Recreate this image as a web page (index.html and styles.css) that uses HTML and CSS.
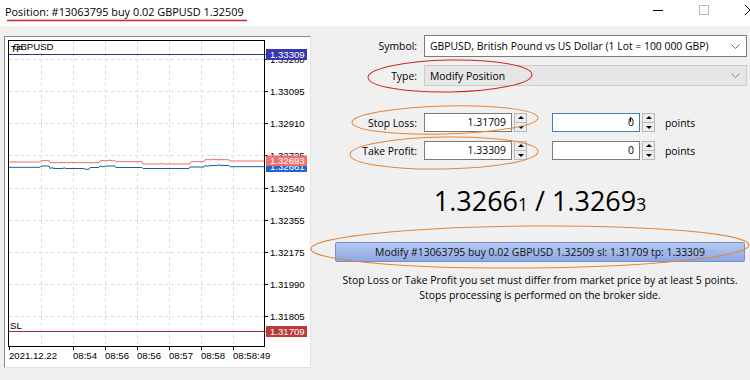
FILE: index.html
```html
<!DOCTYPE html>
<html lang="en">
<head>
    <meta charset="UTF-8">
    <title>Position: #13063795 buy 0.02 GBPUSD 1.32509</title>
    <link rel="stylesheet" href="styles.css">
</head>
<body>
    <div class="titlebar">
        <span class="title">Position: #13063795 buy 0.02 GBPUSD 1.32509</span>
        <div class="win-controls">
            <span class="win-btn">
                <svg width="12" height="12" viewBox="0 0 12 12"><path d="M1 6.5h10" stroke="#000" stroke-width="1"/></svg>
            </span>
            <span class="win-btn">
                <svg width="12" height="12" viewBox="0 0 12 12"><rect x="1.5" y="1.5" width="9" height="9" fill="none" stroke="#b4b4b4"/></svg>
            </span>
            <span class="win-btn">
                <svg width="12" height="12" viewBox="0 0 12 12"><path d="M1 1l10 10M11 1L1 11" stroke="#000" stroke-width="1"/></svg>
            </span>
        </div>
    </div>

    <div class="main">
        <div class="chart-panel">
            <svg class="chart" width="305" height="330" viewBox="5 37 305 330">
                <!-- grid -->
                <g class="grid">
                    <path d="M41.5 41V346M73.5 41V346M105.5 41V346M137.5 41V346M169.5 41V346M201.5 41V346M233.5 41V346"/>
                    <path d="M9 59.5H264M9 91.5H264M9 123.5H264M9 155.5H264M9 188.5H264M9 220.5H264M9 252.5H264M9 284.5H264M9 316.5H264"/>
                </g>
                <path class="ticks" d="M264 59.5h4M264 91.5h4M264 123.5h4M264 155.5h4M264 188.5h4M264 220.5h4M264 252.5h4M264 284.5h4M264 316.5h4M9.5 346v4M73.5 346v4M105.5 346v4M137.5 346v4M169.5 346v4M201.5 346v4M233.5 346v4"/>
                <rect class="frame" x="8.5" y="40.5" width="256" height="306"/>

                <g class="axis">
                    <text x="270" y="63">1.33280</text>
                    <text x="270" y="95">1.33095</text>
                    <text x="270" y="127">1.32910</text>
                    <text x="270" y="159">1.32725</text>
                    <text x="270" y="192">1.32540</text>
                    <text x="270" y="224">1.32355</text>
                    <text x="270" y="256">1.32175</text>
                    <text x="270" y="288">1.31990</text>
                    <text x="270" y="320">1.31805</text>
                    <text x="9" y="359">2021.12.22</text>
                    <text x="73" y="359">08:54</text>
                    <text x="105" y="359">08:56</text>
                    <text x="137" y="359">08:56</text>
                    <text x="169" y="359">08:57</text>
                    <text x="201" y="359">08:58</text>
                    <text x="233" y="359">08:58:49</text>
                </g>

                <!-- take profit -->
                <path d="M9 54.5H266" stroke="#30308e" stroke-width="1"/>
                <text class="tag-text" x="10.5" y="51.5">TP</text>
                <text class="tag-text" x="13" y="50">GBPUSD</text>
                <rect x="266" y="49" width="41" height="11" fill="#3636ae"/>
                <text class="label-text" x="270" y="57.5">1.33309</text>

                <!-- bid / ask -->
                <polyline class="ask" points="9,162 40,162 41,160.7 49,160.7 50,162.7 70,162.7 71,162 73,162.7 99,162.7 100,160.7 108,160.7 109,160 112,160.7 115,160.7 116,161.7 142,161.7 143,164 160,164 161,163.4 163,164 190,164 191,161.7 204,161.7 205,159.7 212,159.7 213,159 216,159.7 229,159.7 230,161 264,161"/>
                <polyline class="bid" points="9,167.3 40,167.3 41,166 49,166 50,168.5 52,167.6 54,168.5 63,168.5 64,167.8 66,168.5 84,168.5 85,169.3 89,169.3 90,167.5 99,167.5 100,166 103,166.8 106,166 115,166 116,167.5 142,167.5 143,168.5 189,168.5 190,167 204,167 205,165.5 208,166.2 210,165.5 217,165.5 218,164.8 221,165.5 229,165.5 230,166.7 264,166.7"/>
                <rect x="266" y="161" width="41" height="11" fill="#2462cf"/>
                <text class="label-text" x="270" y="169.5">1.32661</text>
                <rect x="266" y="155.5" width="41" height="10.5" fill="#f0706c"/>
                <text class="label-text" x="270" y="164">1.32693</text>

                <!-- stop loss -->
                <path d="M9 331.5H266" stroke="#a3302e" stroke-width="1"/>
                <text class="tag-text" x="10" y="329">SL</text>
                <rect x="266" y="326" width="41" height="11" fill="#bb3a38"/>
                <text class="label-text" x="270" y="334.5">1.31709</text>
            </svg>
        </div>

        <div class="dialog">
            <div class="field symbol-field">
                <label class="field-label">Symbol:</label>
                <div class="select">
                    <span>GBPUSD, British Pound vs US Dollar (1 Lot = 100 000 GBP)</span>
                    <svg class="chevron" width="9" height="5" viewBox="0 0 9 5"><path d="M0.5 0.5l4 4 4-4" fill="none" stroke="#6a6a6a"/></svg>
                </div>
            </div>

            <div class="field type-field">
                <label class="field-label">Type:</label>
                <div class="select disabled">
                    <span>Modify Position</span>
                    <svg class="chevron" width="9" height="5" viewBox="0 0 9 5"><path d="M0.5 0.5l4 4 4-4" fill="none" stroke="#8a8a8a"/></svg>
                </div>
            </div>

            <div class="field sl-field">
                <label class="field-label">Stop Loss:</label>
                <div class="num">1.31709</div>
                <div class="spin"><span class="up"></span><span class="down"></span></div>
                <div class="num focused"><span class="caret"></span>0</div>
                <div class="spin"><span class="up"></span><span class="down"></span></div>
                <span class="unit">points</span>
            </div>

            <div class="field">
                <label class="field-label">Take Profit:</label>
                <div class="num">1.33309</div>
                <div class="spin"><span class="up"></span><span class="down"></span></div>
                <div class="num">0</div>
                <div class="spin"><span class="up"></span><span class="down"></span></div>
                <span class="unit">points</span>
            </div>

            <div class="order-box">
                <div class="quote">1.3266<span class="pip">1</span> / 1.3269<span class="pip">3</span></div>
                <button class="modify-btn">Modify #13063795 buy 0.02 GBPUSD 1.32509 sl: 1.31709 tp: 1.33309</button>
                <p class="note">Stop Loss or Take Profit you set must differ from market price by at least 5 points.<br>Stops processing is performed on the broker side.</p>
            </div>
        </div>
    </div>

    <!-- hand drawn marks over the screenshot -->
    <svg class="marks" width="750" height="380" viewBox="0 0 750 380">
        <path d="M7 20.5H247" stroke="#d42424" stroke-width="1.4"/>
        <ellipse cx="450" cy="76" rx="82" ry="16" stroke="#c8242c" transform="rotate(-1 450 76)"/>
        <ellipse cx="445" cy="120" rx="93" ry="14" stroke="#e3843a" transform="rotate(-1.5 445 120)"/>
        <ellipse cx="444" cy="153" rx="94" ry="16" stroke="#e3843a" transform="rotate(-1 444 153)"/>
        <ellipse cx="530" cy="247" rx="219" ry="21" stroke="#e3843a" transform="rotate(-0.5 530 247)"/>
    </svg>
</body>
</html>
```

FILE: styles.css
```css
* {
    margin: 0;
    padding: 0;
    box-sizing: border-box;
}

body {
    width: 750px;
    height: 380px;
    overflow: hidden;
    position: relative;
    background-color: #f0f0f0;
    font-family: 'Open Sans', 'Noto Sans', sans-serif;
    font-size: 10.4px;
    color: #000;
}

/* window title */
.titlebar {
    height: 26px;
    background: #fff;
    display: flex;
    align-items: center;
    padding-left: 5px;
}

.title {
    font-size: 10.9px;
    position: relative;
    top: -2px;
}

.win-controls {
    margin-left: auto;
    margin-right: -23px;
    display: flex;
    align-self: stretch;
}

.win-btn {
    width: 46px;
    display: flex;
    align-items: center;
    justify-content: center;
    padding-bottom: 6px;
}

.main {
    display: flex;
    padding: 10px 0 0 4px;
}

/* chart */
.chart-panel {
    width: 307px;
    height: 332px;
    background: #fff;
    border: 1px solid #e2e2e2;
    border-top-color: #8a8a8a;
    border-left-color: #8a8a8a;
}

.chart {
    display: block;
    font-family: 'Liberation Sans', Arial, sans-serif;
}

.grid path {
    stroke: #dadada;
    stroke-dasharray: 3 3;
    fill: none;
}

.ticks {
    stroke: #000;
    fill: none;
}

.frame {
    fill: none;
    stroke: #000;
}

.axis text,
.tag-text {
    font-size: 9.6px;
    fill: #000;
}

.label-text {
    font-size: 9.6px;
    fill: #fff;
}

.ask {
    fill: none;
    stroke: #e2706a;
    stroke-width: 1;
}

.bid {
    fill: none;
    stroke: #1f5d9c;
    stroke-width: 1;
}

/* order dialog */
.dialog {
    flex: 1;
    margin-top: -1px;
}

.field {
    display: flex;
    align-items: center;
}

.field-label {
    width: 106px;
    margin-right: 7px;
    text-align: right;
}

.symbol-field {
    margin-bottom: 8px;
}

.type-field {
    margin-bottom: 27px;
}

.sl-field {
    margin-bottom: 9px;
}

.select {
    width: 323px;
    height: 22px;
    background: #fff;
    border: 1px solid #7a7a7a;
    display: flex;
    align-items: center;
    padding: 0 6px 0 5px;
}

.select.disabled {
    height: 21px;
    background: #e6e6e6;
    border-color: #cccccc;
}

.chevron {
    margin-left: auto;
}

.num {
    width: 88px;
    height: 19px;
    background: #fff;
    border: 1px solid #7a7a7a;
    text-align: right;
    padding-right: 5px;
    line-height: 17px;
    position: relative;
}

.num.focused {
    border-color: #3c7fc1;
}

.caret {
    position: absolute;
    right: 8px;
    top: 3px;
    width: 1px;
    height: 5px;
    background: #000;
}

.spin {
    width: 13px;
    height: 19px;
    margin: 0 25px 0 2px;
    display: flex;
    flex-direction: column;
    border: 1px solid #b8b8b8;
    background: #ededed;
}

.spin span {
    flex: 1;
    position: relative;
}

.spin .up {
    border-bottom: 1px solid #b8b8b8;
}

.spin span::after {
    content: '';
    position: absolute;
    left: 3px;
    border-left: 3px solid transparent;
    border-right: 3px solid transparent;
}

.spin .up::after {
    top: 2px;
    border-bottom: 3px solid #000;
}

.spin .down::after {
    top: 3px;
    border-top: 3px solid #000;
}

.field .spin:last-of-type {
    margin-right: 10px;
}

/* quote, button and note */
.order-box {
    width: 410px;
    margin-left: 24px;
    display: flex;
    flex-direction: column;
    align-items: center;
}

.quote {
    font-size: 27px;
    line-height: 30px;
    margin-top: 26px;
    margin-bottom: 23px;
}

.pip {
    font-size: 17.5px;
}

.modify-btn {
    width: 410px;
    height: 20px;
    font-family: inherit;
    font-size: 10.4px;
    color: #111;
    background: linear-gradient(#b6c9f2, #8ca7e3);
    border: 1px solid #7890c6;
    border-radius: 2px;
}

.note {
    margin-top: 11px;
    text-align: center;
    line-height: 15px;
}

.marks {
    position: absolute;
    top: 0;
    left: 0;
    pointer-events: none;
}

.marks ellipse {
    fill: none;
    stroke-width: 1;
}
```
